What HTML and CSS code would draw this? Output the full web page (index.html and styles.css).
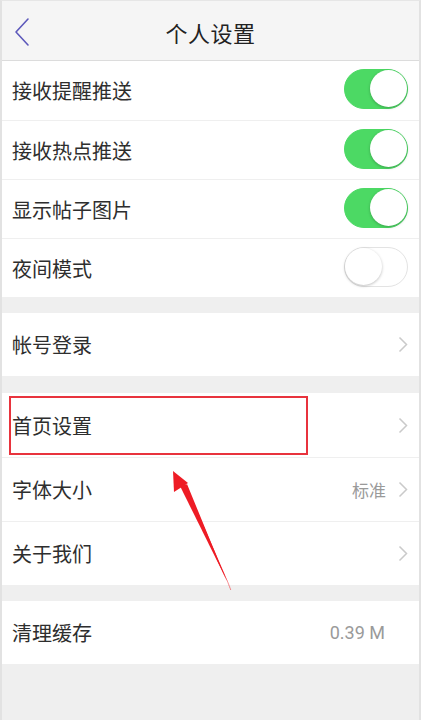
FILE: index.html
```html
<!DOCTYPE html>
<html lang="zh-CN">
<head>
<meta charset="utf-8">
<title>个人设置</title>
<link rel="stylesheet" href="styles.css">
</head>
<body>
<div class="screen">
  <header class="nav">
    <svg class="back" width="16" height="30" viewBox="0 0 16 30"><polyline points="14,2 2,15 14,28" fill="none" stroke="#5d59bb" stroke-width="1.6" stroke-linecap="round" stroke-linejoin="round"/></svg>
    <h1 class="title">个人设置</h1>
  </header>

  <section class="group first">
    <div class="row short"><span class="label">接收提醒推送</span><span class="switch on"><span class="knob"></span></span></div>
    <div class="row short"><span class="label">接收热点推送</span><span class="switch on"><span class="knob"></span></span></div>
    <div class="row short"><span class="label">显示帖子图片</span><span class="switch on"><span class="knob"></span></span></div>
    <div class="row short"><span class="label">夜间模式</span><span class="switch"><span class="knob"></span></span></div>
  </section>

  <section class="group">
    <div class="row"><span class="label">帐号登录</span><svg class="chev" width="10" height="17" viewBox="0 0 10 17"><polyline points="1.5,1.5 8.5,8.5 1.5,15.5" fill="none" stroke="#cacaca" stroke-width="1.5"/></svg></div>
  </section>

  <section class="group wide">
    <div class="row tall"><span class="label">首页设置</span><svg class="chev" width="10" height="17" viewBox="0 0 10 17"><polyline points="1.5,1.5 8.5,8.5 1.5,15.5" fill="none" stroke="#cacaca" stroke-width="1.5"/></svg></div>
    <div class="row tall"><span class="label">字体大小</span><span class="value">标准</span><svg class="chev" width="10" height="17" viewBox="0 0 10 17"><polyline points="1.5,1.5 8.5,8.5 1.5,15.5" fill="none" stroke="#cacaca" stroke-width="1.5"/></svg></div>
    <div class="row tall"><span class="label">关于我们</span><svg class="chev" width="10" height="17" viewBox="0 0 10 17"><polyline points="1.5,1.5 8.5,8.5 1.5,15.5" fill="none" stroke="#cacaca" stroke-width="1.5"/></svg></div>
  </section>

  <section class="group">
    <div class="row"><span class="label">清理缓存</span><span class="value num">0.39 M</span></div>
  </section>

  <svg class="annot" width="421" height="720" viewBox="0 0 421 720">
    <rect x="10" y="397" width="297" height="57" fill="none" stroke="#e8333d" stroke-width="2"/>
    <polygon points="231,590 183,487 187,484 230.5,590" fill="#ee1c25"/>
    <polygon points="173,471 188,483 174,492" fill="#ee1c25"/>
    <polygon points="180,486 185,483 231.5,590" fill="#ee1c25"/>
  </svg>
</div>
</body>
</html>
```

FILE: styles.css
```css
* { box-sizing: border-box; }
html, body { margin: 0; padding: 0; }
body {
  font-family: "Noto Sans CJK SC", "Noto Sans", sans-serif;
  background: #efefef;
}
.screen {
  position: relative;
  width: 421px;
  min-height: 720px;
  background: #efefef;
  border-left: 2px solid #e2e2e2;
  border-right: 2px solid #e2e2e2;
  border-top: 1px solid #e6e6e6;
}
.nav {
  position: relative;
  height: 60px;
  background: #f5f5f5;
  border-bottom: 1px solid #dcdcdc;
  display: flex;
  align-items: center;
  justify-content: center;
}
.back {
  position: absolute;
  left: 12px;
  top: 16px;
}
.title {
  margin: 0;
  padding-top: 3px;
  font-size: 22px;
  font-weight: normal;
  color: #222;
  letter-spacing: 0.5px;
}
.group {
  background: #fff;
  margin-top: 16px;
}
.group.first { margin-top: 0; }
.group.wide { margin-top: 17px; }
.row {
  height: 63px;
  display: flex;
  align-items: center;
  padding: 0 11px 0 10px;
  border-top: 1px solid #efefef;
}
.row:first-child { border-top: none; }
.row.short { height: 59px; }
.row.tall { height: 64px; }
.label {
  flex: 1;
  font-size: 20px;
  color: #2e2e2e;
}
.value {
  font-size: 17px;
  color: #9a9a9a;
  margin-right: 12px;
}
.value.num {
  font-family: Roboto, "Noto Sans", sans-serif;
  font-size: 18px;
  margin-right: 23px;
}
.chev { display: block; }
.switch {
  position: relative;
  width: 64px;
  height: 40px;
  border-radius: 20px;
  background: #fff;
  border: 1.5px solid #e3e3e3;
  margin-top: -3px;
}
.switch.on {
  background: #4cd964;
  border-color: #4cd964;
}
.knob {
  position: absolute;
  top: 0;
  left: 0;
  width: 37px;
  height: 37px;
  border-radius: 50%;
  background: #fff;
  box-shadow: 0 1px 3px rgba(0,0,0,0.25);
}
.switch.on .knob {
  left: auto;
  right: 0;
}
.annot {
  position: absolute;
  left: -2px;
  top: -1px;
  pointer-events: none;
}
```
